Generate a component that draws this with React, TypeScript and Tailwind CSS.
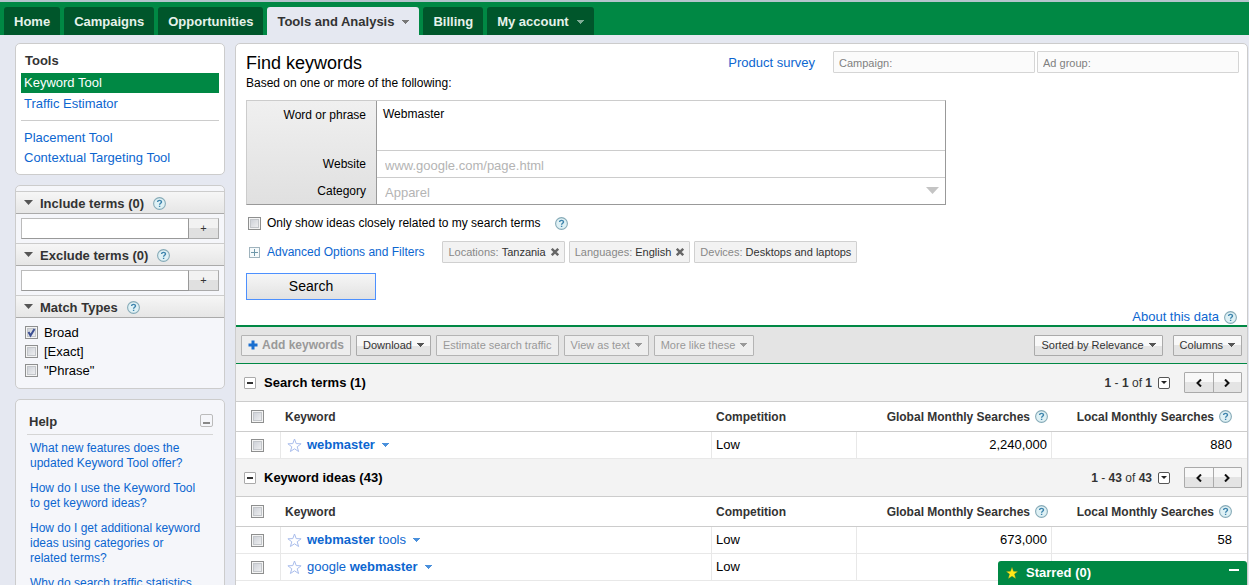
import type { ReactNode } from 'react';

const tabs = [
  { label: 'Home' },
  { label: 'Campaigns' },
  { label: 'Opportunities' },
  { label: 'Tools and Analysis', menu: true, active: true },
  { label: 'Billing' },
  { label: 'My account', menu: true },
];

const helpLinks = [
  'What new features does the updated Keyword Tool offer?',
  'How do I use the Keyword Tool to get keyword ideas?',
  'How do I get additional keyword ideas using categories or related terms?',
  'Why do search traffic statistics',
];

const chips = [
  { name: 'Locations:', value: 'Tanzania', removable: true },
  { name: 'Languages:', value: 'English', removable: true },
  { name: 'Devices:', value: 'Desktops and laptops', removable: false },
];

type Row = { id: string; keyword: ReactNode; competition: string; global?: string; local?: string };

const searchTerms: Row[] = [
  { id: 'webmaster', keyword: <b>webmaster</b>, competition: 'Low', global: '2,240,000', local: '880' },
];

const keywordIdeas: Row[] = [
  { id: 'webmaster tools', keyword: <><b>webmaster</b> tools</>, competition: 'Low', global: '673,000', local: '58' },
  { id: 'google webmaster', keyword: <>google <b>webmaster</b></>, competition: 'Low' },
];

const Arrow = ({ className = '' }: { className?: string }) => (
  <svg viewBox="0 0 8 4" className={`h-1 w-2 shrink-0 ${className}`} fill="currentColor" shapeRendering="crispEdges">
    <path d="M0 0h8L4 4z" />
  </svg>
);

const HelpIcon = () => (
  <button type="button" aria-label="Help" className="shrink-0">
    <svg viewBox="0 0 13 13" className="block size-[13px]">
      <circle cx="6.5" cy="6.5" r="5.9" fill="#dff1f5" stroke="#86aab7" strokeWidth="1.1" />
      <path d="M4.6 5.1c0-2.4 3.9-2.3 3.9-.1 0 1.3-1.9 1.3-1.9 2.7M6.6 8.7v1.3" fill="none" stroke="#3d84ad" strokeWidth="1.4" />
    </svg>
  </button>
);

const CheckBox = ({ id, label, checked = false }: { id?: string; label?: string; checked?: boolean }) => (
  <span className="inline-grid size-[13px] shrink-0">
    <input
      id={id}
      type="checkbox"
      aria-label={label}
      defaultChecked={checked}
      className="peer col-start-1 row-start-1 size-[13px] appearance-none border border-[#8e8f8f] bg-linear-to-br from-[#c6cad2] to-[#f6f6f6] shadow-[inset_0_0_0_1px_#f4f4f4,inset_0_0_0_2px_#c3c6ca]"
    />
    <svg viewBox="0 0 13 13" className="pointer-events-none invisible col-start-1 row-start-1 size-[13px] peer-checked:visible">
      <path d="M3.5 6l2 3.5L9.5 3" fill="none" stroke="#3c4f92" strokeWidth="2" />
    </svg>
  </span>
);

const Collapse = () => (
  <button type="button" aria-label="Collapse" className="flex size-3 items-center justify-center rounded-[1px] border border-[#aaa] bg-white">
    <span className="h-[2px] w-[6px] bg-[#333]" />
  </button>
);

const ToolButton = ({ children, disabled = false }: { children: ReactNode; disabled?: boolean }) => (
  <button
    type="button"
    disabled={disabled}
    className="flex h-[21px] items-center gap-1 rounded-[1px] border border-[#aaa] bg-linear-to-b from-[#f8f8f8] from-50% to-[#e4e4e4] to-50% px-[6px] text-[11px] whitespace-nowrap text-[#333] disabled:border-[#b4b4b4] disabled:bg-[#eee] disabled:bg-none disabled:text-[#999]"
  >
    {children}
  </button>
);

const FilterHeader = ({ title }: { title: string }) => (
  <div className="flex h-[23px] items-center border-t border-b border-t-[#ccc] border-b-[#aaa] bg-linear-to-b from-[#f6f6f6] to-[#e6e6e6] pt-[2px] pl-2">
    <svg viewBox="0 0 9 5" className="mr-[7px] mb-[2px] h-[5px] w-[9px]" fill="#555">
      <path d="M0 0h9L4.5 5z" />
    </svg>
    <h3 className="mr-[9px] text-[13px] font-bold text-[#333]">{title}</h3>
    <HelpIcon />
  </div>
);

const TermInput = ({ label }: { label: string }) => (
  <div className="flex px-[5px] py-1">
    <input aria-label={label} className="h-[21px] min-w-0 flex-1 border border-[#999] border-t-[#bbb] border-l-[#bbb] bg-white px-1 text-[13px]" />
    <button type="button" aria-label={`Add ${label}`} className="h-[21px] w-[30px] border border-l-0 border-[#aaa] border-t-[#ccc] bg-linear-to-b from-[#f2f2f2] from-50% to-[#e0e0e0] to-50% text-[11px] text-[#333]">
      +
    </button>
  </div>
);

const Pager = ({ first, last, total }: { first: number; last: number; total: number }) => (
  <div className="flex items-center text-[12px] text-[#333]">
    <span><b>{first}</b> - <b>{last}</b> of <b>{total}</b></span>
    <button type="button" aria-label="Rows per page" className="ml-[6px] flex size-3 items-center justify-center rounded-[2px] border border-[#555] bg-white">
      <svg viewBox="0 0 6 3" className="h-[3px] w-[6px]" fill="#222"><path d="M0 0h6L3 3z" /></svg>
    </button>
    <div className="ml-[14px] flex h-[21px] w-[58px] divide-x divide-[#aaa] rounded-[1px] border border-[#aaa] bg-linear-to-b from-[#f8f8f8] from-50% to-[#e4e4e4] to-50%">
      <button type="button" aria-label="Previous" className="flex flex-1 items-center justify-center">
        <svg viewBox="0 0 6 8" className="h-2 w-[6px]" fill="none" stroke="#111" strokeWidth="2"><path d="M5 .5L1.5 4 5 7.5" /></svg>
      </button>
      <button type="button" aria-label="Next" className="flex flex-1 items-center justify-center">
        <svg viewBox="0 0 6 8" className="h-2 w-[6px]" fill="none" stroke="#111" strokeWidth="2"><path d="M1 .5L4.5 4 1 7.5" /></svg>
      </button>
    </div>
  </div>
);

const Results = ({ title, rows, total }: { title: string; rows: Row[]; total: number }) => (
  <section>
    <div className="flex h-[38px] items-center justify-between border-b border-[#ccc] bg-[#f3f3f3] pr-[5px] pl-2">
      <div className="flex items-center gap-2">
        <Collapse />
        <h2 className="text-[13px] font-bold">{title}</h2>
      </div>
      <Pager first={1} last={total} total={total} />
    </div>
    <table className="w-full table-fixed border-separate border-spacing-0 text-left">
      <colgroup>
        <col className="w-[45px]" />
        <col />
        <col className="w-[145px]" />
        <col className="w-[195px]" />
        <col className="w-[195px]" />
      </colgroup>
      <thead className="text-[12px] text-[#333]">
        <tr className="h-[30px]">
          <th className="border-b border-[#ccc] pl-[15px]"><div className="flex"><CheckBox label="Select all" /></div></th>
          <th className="border-b border-[#ccc] pl-1">Keyword</th>
          <th className="border-b border-[#ccc] pl-1">Competition</th>
          <th className="border-b border-[#ccc] pr-1">
            <div className="flex items-center justify-end gap-[5px] whitespace-nowrap">Global Monthly Searches <HelpIcon /></div>
          </th>
          <th className="border-b border-[#ccc] pr-[15px]">
            <div className="flex items-center justify-end gap-[5px] whitespace-nowrap">Local Monthly Searches <HelpIcon /></div>
          </th>
        </tr>
      </thead>
      <tbody className="text-[13px]">
        {rows.map((row) => (
          <tr key={row.id} className="h-[27px]">
            <td className="border-r border-b border-[#e8e8e8] pl-[15px]"><div className="flex"><CheckBox label={`Select ${row.id}`} /></div></td>
            <td className="border-r border-b border-[#e8e8e8] pl-[6px]">
              <div className="flex items-center">
                <button type="button" aria-label="Star keyword" className="mr-[5px]">
                  <svg viewBox="0 0 15 15" className="block size-[15px]" fill="#fff" stroke="#a9bdec">
                    <path d="M7.5 1l1.7 4.6 4.9.2-3.9 3 1.4 4.7-4.1-2.700-4.1 2.700 1.400-4.700-3.900-3 4.900-.2z" />
                  </svg>
                </button>
                <a href="#" className="text-[#0c66d0]">{row.keyword}</a>
                <Arrow className="ml-[6px] text-[#4a90dc]" />
              </div>
            </td>
            <td className="border-r border-b border-[#e8e8e8] pl-1">{row.competition}</td>
            <td className="border-r border-b border-[#e8e8e8] pr-1 text-right">{row.global}</td>
            <td className="border-b border-[#e8e8e8] pr-[15px] text-right">{row.local}</td>
          </tr>
        ))}
      </tbody>
    </table>
  </section>
);

const TopNav = () => (
  <nav className="flex h-[35px] items-end gap-1 border-t-2 border-[#b4c4cc] bg-[#008844] pl-1">
    {tabs.map((tab) => (
      <a
        key={tab.label}
        href="#"
        className={`flex h-7 items-center gap-[7px] rounded-t-[3px] px-[10px] pt-[2px] text-[13px] font-bold ${
          tab.active ? 'bg-[#e5e8f1] text-[#333]' : 'bg-[#00562b] text-[#e6f2ea]'
        }`}
      >
        {tab.label}
        {tab.menu && <Arrow className={tab.active ? 'text-[#777]' : 'text-[#7fab95]'} />}
      </a>
    ))}
  </nav>
);

const Sidebar = () => (
  <aside className="flex w-[210px] shrink-0 flex-col gap-[10px] text-[13px]">
    <div className="rounded-[5px] border border-[#ccc] bg-white px-[5px] pt-[6px] pb-[6px]">
      <h2 className="pb-[2px] pl-1 leading-[21px] font-bold text-[#333]">Tools</h2>
      <a href="#" className="block bg-[#008844] pl-[3px] leading-5 text-white">Keyword Tool</a>
      <a href="#" className="block pl-[3px] leading-[22px] text-[#0c66d0]">Traffic Estimator</a>
      <div className="mt-[5px] mb-[7px] border-t border-[#ccc]" />
      <a href="#" className="block pl-[3px] leading-5 text-[#0c66d0]">Placement Tool</a>
      <a href="#" className="block pl-[3px] leading-5 text-[#0c66d0]">Contextual Targeting Tool</a>
    </div>

    <div className="rounded-[5px] border border-[#ccc] bg-[#f5f6fa] pt-[5px] pb-2">
      <FilterHeader title="Include terms (0)" />
      <TermInput label="included term" />
      <FilterHeader title="Exclude terms (0)" />
      <TermInput label="excluded term" />
      <FilterHeader title="Match Types" />
      <div className="pt-[5px] pl-[9px]">
        {['Broad', '[Exact]', '"Phrase"'].map((type, i) => (
          <div key={type} className="flex h-[19px] items-center gap-[6px]">
            <CheckBox id={`match-${i}`} checked={i === 0} />
            <label htmlFor={`match-${i}`}>{type}</label>
          </div>
        ))}
      </div>
    </div>

    <div className="rounded-[5px] border border-[#ccc] bg-[#f5f6fa] px-[11px] pt-[10px] pb-3">
      <div className="flex h-[25px] items-center justify-between border-b border-[#d5d5d5] pl-[2px]">
        <h2 className="font-bold text-[#333]">Help</h2>
        <button type="button" aria-label="Minimize help" className="mb-1 flex size-[13px] items-end justify-center rounded-[2px] border border-[#bbb] pb-[2px]">
          <span className="h-[2px] w-[7px] bg-[#888]" />
        </button>
      </div>
      <ul className="flex flex-col gap-[10px] pt-[6px] pr-3 pl-[3px] text-[12px] leading-[15px]">
        {helpLinks.map((text) => (
          <li key={text}><a href="#" className="text-[#0c66d0]">{text}</a></li>
        ))}
      </ul>
    </div>
  </aside>
);

const SearchForm = () => (
  <form className="pt-[7px] pr-2 pl-[10px]">
    <div className="flex items-start">
      <div className="flex-1">
        <h1 className="text-[18px] leading-6">Find keywords</h1>
        <p className="text-[12px] leading-4">Based on one or more of the following:</p>
      </div>
      <a href="#" className="mr-[18px] text-[13px] leading-[24px] text-[#0c66d0]">Product survey</a>
      <div className="flex gap-[2px]">
        <input aria-label="Campaign" placeholder="Campaign:" className="h-[22px] w-[202px] rounded-[1px] border border-[#d5d5d5] bg-[#fbfbfb] px-[5px] pt-[2px] text-[11px] placeholder:text-[#808080]" />
        <input aria-label="Ad group" placeholder="Ad group:" className="h-[22px] w-[202px] rounded-[1px] border border-[#d5d5d5] bg-[#fbfbfb] px-[5px] pt-[2px] text-[11px] placeholder:text-[#808080]" />
      </div>
    </div>

    <div className="mt-[9px] grid w-[700px] max-w-full grid-cols-[130px_1fr] grid-rows-[50px_27px_26px] border border-t-[#ccc] border-r-[#999] border-b-[#999] border-l-[#ccc] bg-linear-to-b from-[#f0f0f0] to-[#e0e0e0] text-[12px]">
      <label htmlFor="phrase" className="border-r border-[#999] pt-[5px] pr-[10px] text-right">Word or phrase</label>
      <textarea id="phrase" defaultValue="Webmaster" className="resize-none border-b border-[#ccc] bg-white px-[6px] py-1" />
      <label htmlFor="website" className="border-r border-[#999] pt-1 pr-[10px] text-right">Website</label>
      <input id="website" placeholder="www.google.com/page.html" className="border-b border-[#ccc] bg-white px-2 pt-1 text-[13px] placeholder:text-[#b4b4b4]" />
      <label htmlFor="category" className="border-r border-[#999] pt-1 pr-[10px] text-right">Category</label>
      <div className="relative flex bg-white">
        <select id="category" className="flex-1 appearance-none px-2 pt-1 text-[13px] text-[#b4b4b4]">
          <option>Apparel</option>
        </select>
        <svg viewBox="0 0 13 7" className="pointer-events-none absolute top-[9px] right-[6px] h-[7px] w-[13px]" fill="#c4c4c4">
          <path d="M0 0h13L6.5 7z" />
        </svg>
      </div>
    </div>

    <div className="mt-[9px] flex h-[18px] items-center pl-[2px] text-[12px]">
      <CheckBox id="related" />
      <label htmlFor="related" className="mr-[15px] ml-[6px]">Only show ideas closely related to my search terms</label>
      <HelpIcon />
    </div>

    <div className="mt-[9px] flex h-[22px] items-center">
      <button type="button" aria-label="Expand options" className="ml-[3px] flex size-[11px] items-center justify-center border border-[#9fb3bd] bg-[#f6fafb]">
        <svg viewBox="0 0 7 7" className="size-[7px]" stroke="#6f98aa" shapeRendering="crispEdges"><path d="M0 3.5h7M3.5 0v7" /></svg>
      </button>
      <a href="#" className="mr-[18px] ml-[7px] text-[12px] text-[#0c66d0]">Advanced Options and Filters</a>
      <div className="flex gap-1">
        {chips.map((chip) => (
          <span key={chip.name} className="flex h-[22px] items-center rounded-[1px] border border-[#d0d0d0] bg-[#f2f2f2] px-[5px] text-[11px] text-[#888]">
            {chip.name}&nbsp;<span className="text-[#333]">{chip.value}</span>
            {chip.removable && (
              <button type="button" aria-label={`Remove ${chip.value}`} className="ml-[5px]">
                <svg viewBox="0 0 8 8" className="block size-2" stroke="#666" strokeWidth="2.4"><path d="M.8.8l6.4 6.4M7.2.8L.8 7.2" /></svg>
              </button>
            )}
          </span>
        ))}
      </div>
    </div>

    <button type="submit" className="mt-[10px] block h-[27px] w-[130px] border border-[#4d90fe] bg-linear-to-b from-[#f6f6f6] to-[#e2e2e2] text-[14px]">
      Search
    </button>
    <div className="mt-[9px] flex h-4 items-center justify-end gap-[5px] pr-[2px]">
      <a href="#" className="text-[13px] text-[#0c66d0]">About this data</a>
      <HelpIcon />
    </div>
  </form>
);

const Toolbar = () => (
  <div className="flex h-[39px] items-center gap-[5px] border-t-2 border-b border-[#008844] bg-[#e4e4e4] px-[5px]">
    <ToolButton disabled>
      <svg viewBox="0 0 10 10" className="size-[10px]" fill="#1a6fd0"><path d="M3.5 0.5h3v3h3v3h-3v3h-3v-3h-3v-3h3z" /></svg>
      <b className="text-[12px]">Add keywords</b>
    </ToolButton>
    <ToolButton>Download <Arrow className="text-[#555]" /></ToolButton>
    <ToolButton disabled>Estimate search traffic</ToolButton>
    <ToolButton disabled>View as text <Arrow /></ToolButton>
    <ToolButton disabled>More like these <Arrow /></ToolButton>
    <div className="ml-auto flex gap-[10px]">
      <ToolButton>Sorted by Relevance <Arrow className="text-[#555]" /></ToolButton>
      <ToolButton>Columns <Arrow className="text-[#555]" /></ToolButton>
    </div>
  </div>
);

const App = () => {
  return (
    <div className="h-screen overflow-hidden bg-[#e5e8f1] font-['Liberation_Sans',Arial,sans-serif] text-black">
      <TopNav />
      <div className="flex min-h-full gap-[10px] pt-2 pr-[1px] pl-[15px]">
        <Sidebar />
        <main className="min-w-0 flex-1 rounded-t-[5px] border border-[#ccc] bg-white">
          <SearchForm />
          <Toolbar />
          <Results title="Search terms (1)" rows={searchTerms} total={1} />
          <Results title="Keyword ideas (43)" rows={keywordIdeas} total={43} />
        </main>
      </div>
      <div className="fixed right-[2px] bottom-0 flex h-6 w-[249px] items-center rounded-t-[3px] bg-[#008844] px-2 text-white">
        <svg viewBox="0 0 12 12" className="mr-2 size-3" fill="#ffe81a" stroke="#3f6c2c" strokeWidth=".3">
          <path d="M6 0l1.5 4.2 4.5.2-3.5 2.7 1.3 4.7L6 9.2l-3.8 2.6 1.3-4.7L0 4.4l4.5-.2z" />
        </svg>
        <span className="text-[13px] font-bold">Starred (0)</span>
        <button type="button" aria-label="Minimize" className="ml-auto flex h-4 w-[10px] items-center pb-[6px]">
          <span className="h-[2px] w-[10px] bg-white" />
        </button>
      </div>
    </div>
  );
};

export default App;
